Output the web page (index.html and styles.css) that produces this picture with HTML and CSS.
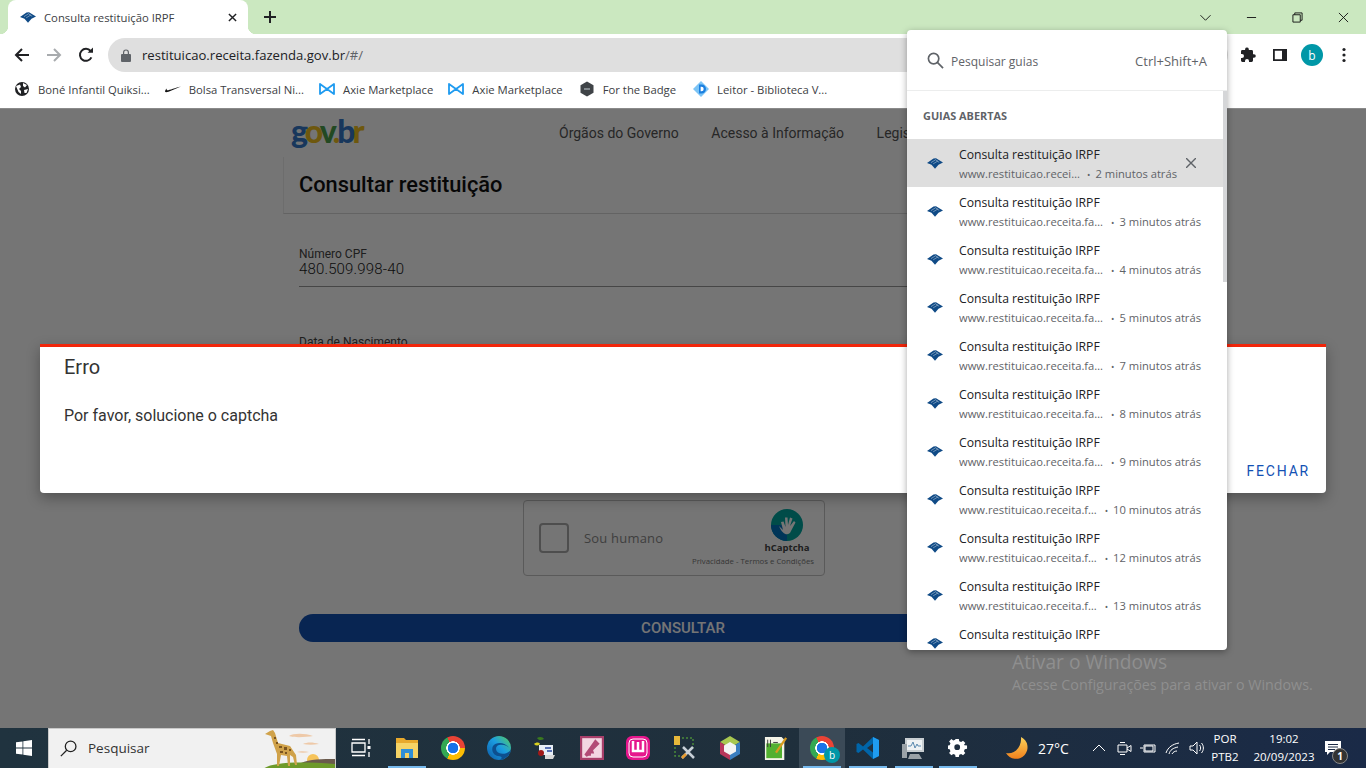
FILE: index.html
```html
<!DOCTYPE html>
<html lang="pt-BR">
<head>
    <meta charset="UTF-8">
    <title>Consulta restituição IRPF</title>
    <link rel="stylesheet" href="styles.css">
</head>
<body>

<svg class="defs" width="0" height="0">
    <symbol id="receita" viewBox="0 0 16 11">
        <path fill="#0f4a86" d="M0 5 6.500 .6 9 .2 16 4.600 11.500 6.800 8 10.800 4.500 6.800z"/>
        <path fill="none" stroke="#fff" stroke-width=".4" d="M4 4.600 8.500 1.800M6.200 5.800 10.800 3M8.400 1.600 12.200 4.400"/>
    </symbol>
    <symbol id="axie" viewBox="0 0 16 14">
        <path fill="none" stroke="#1f9bf0" stroke-width="1.800" stroke-linejoin="round" d="M1 2 8 7 15 2V12L8 7 1 12z"/>
    </symbol>
</svg>

<header class="browser">
    <div class="tabstrip">
        <div class="tab">
            <svg class="fav"><use href="#receita"/></svg>
            <span class="tab-title">Consulta restituição IRPF</span>
            <svg class="tab-close" viewBox="0 0 10 10"><path d="M1 1 9 9M9 1 1 9"/></svg>
        </div>
        <svg class="new-tab" viewBox="0 0 12 12"><path d="M6 0V12M0 6H12"/></svg>
        <div class="win-controls">
            <span class="win-btn"><svg viewBox="0 0 12 12"><path d="M.5 3.500 6 9 11.500 3.500"/></svg></span>
            <span class="win-btn"><svg viewBox="0 0 12 12"><path d="M1 6H11"/></svg></span>
            <span class="win-btn"><svg viewBox="0 0 12 12"><path d="M1 3H9V11H1zM3 3V1H11V9H9"/></svg></span>
            <span class="win-btn"><svg viewBox="0 0 12 12"><path d="M1 1 11 11M11 1 1 11"/></svg></span>
        </div>
    </div>

    <div class="toolbar">
        <svg class="nav-icon" viewBox="0 0 16 16"><path d="M15 8H2M8 2 2 8 8 14"/></svg>
        <svg class="nav-icon off" viewBox="0 0 16 16"><path d="M1 8H14M8 2 14 8 8 14"/></svg>
        <svg class="nav-icon" viewBox="0 0 16 16"><path d="M13.400 10.400A6 6 0 1 1 12.600 4"/><path class="solid" d="M9.600 5.800H15V.6z"/></svg>
        <div class="omnibox">
            <svg class="lock" viewBox="0 0 10 13"><path fill="#5f6368" d="M1 5H2V3.400a3 3 0 0 1 6 0V5H9a1 1 0 0 1 1 1V12a1 1 0 0 1-1 1H1a1 1 0 0 1-1-1V6a1 1 0 0 1 1-1zM3.200 5H6.800V3.400a1.800 1.800 0 0 0-3.600 0z"/></svg>
            <span class="url">restituicao.receita.fazenda.gov.br<span class="url-rest">/#/</span></span>
        </div>
        <div class="toolbar-right">
            <svg class="ext" viewBox="0 0 16 16"><path fill="#202124" d="M14 7.200H13V4.400a1.400 1.400 0 0 0-1.400-1.400H8.800V2a1.900 1.900 0 0 0-3.700 0V3H2.400A1.400 1.400 0 0 0 1 4.400V7H2a2 2 0 0 1 0 4H1v2.600A1.400 1.400 0 0 0 2.400 15H5V14a2 2 0 0 1 4 0v1h2.600a1.400 1.400 0 0 0 1.400-1.400V10.800h1a1.800 1.800 0 0 0 0-3.600z"/></svg>
            <svg class="ext" viewBox="0 0 16 16"><path fill="#202124" fill-rule="evenodd" d="M1 2H15V14H1zM2.800 3.800V12.200H10V3.800z"/></svg>
            <span class="avatar">b</span>
            <svg class="ext" viewBox="0 0 16 16"><circle cx="8" cy="2.500" r="1.600" fill="#202124"/><circle cx="8" cy="8" r="1.600" fill="#202124"/><circle cx="8" cy="13.500" r="1.600" fill="#202124"/></svg>
        </div>
    </div>

    <nav class="bookmarks">
        <a class="bookmark">
            <svg class="bm-icon" viewBox="0 0 16 16"><circle cx="8" cy="8" r="7" fill="#202124"/><path fill="#fff" d="M2 5 6 3.500 7 6 5 8 7 10V13L4.500 11zM9 2 13 4 11 6.500 9 5zM10 9 14 8 12.500 12 10.500 12z"/></svg>
            <span>Boné Infantil Quiksi...</span>
        </a>
        <a class="bookmark">
            <svg class="bm-icon" viewBox="0 0 16 16"><path fill="#111" d="M0 10.500C.5 8.500 1 8 2 7.500 1.500 8.500 1.500 9.300 2.600 9.300 4 9.300 11 6.600 16 5.500L3.500 10.800C1.500 11.500.2 11.500 0 10.500z"/></svg>
            <span>Bolsa Transversal Ni...</span>
        </a>
        <a class="bookmark">
            <svg class="bm-icon"><use href="#axie"/></svg>
            <span>Axie Marketplace</span>
        </a>
        <a class="bookmark">
            <svg class="bm-icon"><use href="#axie"/></svg>
            <span>Axie Marketplace</span>
        </a>
        <a class="bookmark">
            <svg class="bm-icon" viewBox="0 0 16 16"><path fill="#3f4347" d="M8 .5 14.500 4.200V11.800L8 15.500 1.500 11.800V4.200z"/><path stroke="#9aa0a6" stroke-width="1.500" d="M5 8H11"/></svg>
            <span>For the Badge</span>
        </a>
        <a class="bookmark">
            <svg class="bm-icon" viewBox="0 0 16 16"><path fill="#7cc4f5" d="M8 0 16 8 8 16 0 8z"/><path fill="#1a7fe0" d="M6 3.500H8.500a4.500 4.500 0 0 1 0 9H6z"/><path fill="#fff" d="M7.600 5.800H8.500a2.200 2.200 0 0 1 0 4.400H7.600z"/></svg>
            <span>Leitor - Biblioteca V...</span>
        </a>
    </nav>
</header>

<main class="page">
    <div class="site">
        <div class="site-head">
            <span class="logo"><b class="l-blue">g</b><b class="l-yellow">o</b><b class="l-green">v</b><b class="l-yellow">.</b><b class="l-blue">b</b><b class="l-yellow">r</b></span>
            <div class="site-nav">
                <a>Órgãos do Governo</a>
                <a>Acesso à Informação</a>
                <a>Legislação</a>
            </div>
        </div>
        <section class="card">
            <h1 class="card-title">Consultar restituição</h1>
            <form class="form">
                <div class="field">
                    <label>Número CPF</label>
                    <div class="field-value">480.509.998-40</div>
                </div>
                <div class="field field-date">
                    <label>Data de Nascimento</label>
                    <div class="field-value">&nbsp;</div>
                </div>
                <div class="captcha">
                    <span class="captcha-box"></span>
                    <span class="captcha-text">Sou humano</span>
                    <div class="captcha-brand">
                        <svg class="captcha-logo" viewBox="0 0 32 32">
                            <circle cx="16" cy="16" r="16" fill="#00a6a0"/>
                            <path fill="#0074bf" d="M0 16A16 16 0 0 0 16 32V16z"/>
                            <path fill="#fff" d="M8 17 12 21 10 13 12.500 12.500 14.500 18 14 8.500 16.500 8.500 17 16 19 8.500 21.500 9.500 19 17 23 12 24.500 13.500 20 22C18 27 12 27 8 17z"/>
                        </svg>
                        <strong>hCaptcha</strong>
                        <small>Privacidade - Termos e Condições</small>
                    </div>
                </div>
                <button class="submit" type="button">CONSULTAR</button>
            </form>
        </section>
    </div>

    <div class="scrim"></div>

    <div class="dialog">
        <h2>Erro</h2>
        <p>Por favor, solucione o captcha</p>
        <div class="dialog-actions"><a>FECHAR</a></div>
    </div>

    <div class="watermark">
        <div class="wm-title">Ativar o Windows</div>
        <div class="wm-sub">Acesse Configurações para ativar o Windows.</div>
    </div>
</main>

<aside class="tab-search">
    <div class="ts-head">
        <svg class="ts-glass" viewBox="0 0 18 18"><circle cx="7" cy="7" r="5.500"/><path d="M11 11 17 17"/></svg>
        <span class="ts-placeholder">Pesquisar guias</span>
        <span class="ts-shortcut">Ctrl+Shift+A</span>
    </div>
    <div class="ts-body">
        <div class="ts-list">
            <div class="ts-label">GUIAS ABERTAS</div>
            <div class="ts-row current">
                <svg class="fav"><use href="#receita"/></svg>
                <div class="ts-text">
                    <div class="ts-title">Consulta restituição IRPF</div>
                    <div class="ts-sub"><span class="ts-url">www.restituicao.receita.fazenda.gov.br</span><span class="ts-time">2 minutos atrás</span></div>
                </div>
                <svg class="ts-close" viewBox="0 0 10 10"><path d="M0 0 10 10M10 0 0 10"/></svg>
            </div>
            <div class="ts-row">
                <svg class="fav"><use href="#receita"/></svg>
                <div class="ts-text">
                    <div class="ts-title">Consulta restituição IRPF</div>
                    <div class="ts-sub"><span class="ts-url">www.restituicao.receita.fazenda.gov.br</span><span class="ts-time">3 minutos atrás</span></div>
                </div>
            </div>
            <div class="ts-row">
                <svg class="fav"><use href="#receita"/></svg>
                <div class="ts-text">
                    <div class="ts-title">Consulta restituição IRPF</div>
                    <div class="ts-sub"><span class="ts-url">www.restituicao.receita.fazenda.gov.br</span><span class="ts-time">4 minutos atrás</span></div>
                </div>
            </div>
            <div class="ts-row">
                <svg class="fav"><use href="#receita"/></svg>
                <div class="ts-text">
                    <div class="ts-title">Consulta restituição IRPF</div>
                    <div class="ts-sub"><span class="ts-url">www.restituicao.receita.fazenda.gov.br</span><span class="ts-time">5 minutos atrás</span></div>
                </div>
            </div>
            <div class="ts-row">
                <svg class="fav"><use href="#receita"/></svg>
                <div class="ts-text">
                    <div class="ts-title">Consulta restituição IRPF</div>
                    <div class="ts-sub"><span class="ts-url">www.restituicao.receita.fazenda.gov.br</span><span class="ts-time">7 minutos atrás</span></div>
                </div>
            </div>
            <div class="ts-row">
                <svg class="fav"><use href="#receita"/></svg>
                <div class="ts-text">
                    <div class="ts-title">Consulta restituição IRPF</div>
                    <div class="ts-sub"><span class="ts-url">www.restituicao.receita.fazenda.gov.br</span><span class="ts-time">8 minutos atrás</span></div>
                </div>
            </div>
            <div class="ts-row">
                <svg class="fav"><use href="#receita"/></svg>
                <div class="ts-text">
                    <div class="ts-title">Consulta restituição IRPF</div>
                    <div class="ts-sub"><span class="ts-url">www.restituicao.receita.fazenda.gov.br</span><span class="ts-time">9 minutos atrás</span></div>
                </div>
            </div>
            <div class="ts-row">
                <svg class="fav"><use href="#receita"/></svg>
                <div class="ts-text">
                    <div class="ts-title">Consulta restituição IRPF</div>
                    <div class="ts-sub"><span class="ts-url">www.restituicao.receita.fazenda.gov.br</span><span class="ts-time">10 minutos atrás</span></div>
                </div>
            </div>
            <div class="ts-row">
                <svg class="fav"><use href="#receita"/></svg>
                <div class="ts-text">
                    <div class="ts-title">Consulta restituição IRPF</div>
                    <div class="ts-sub"><span class="ts-url">www.restituicao.receita.fazenda.gov.br</span><span class="ts-time">12 minutos atrás</span></div>
                </div>
            </div>
            <div class="ts-row">
                <svg class="fav"><use href="#receita"/></svg>
                <div class="ts-text">
                    <div class="ts-title">Consulta restituição IRPF</div>
                    <div class="ts-sub"><span class="ts-url">www.restituicao.receita.fazenda.gov.br</span><span class="ts-time">13 minutos atrás</span></div>
                </div>
            </div>
            <div class="ts-row">
                <svg class="fav"><use href="#receita"/></svg>
                <div class="ts-text">
                    <div class="ts-title">Consulta restituição IRPF</div>
                    <div class="ts-sub"><span class="ts-url">www.restituicao.receita.fazenda.gov.br</span><span class="ts-time">15 minutos atrás</span></div>
                </div>
            </div>
        </div>
        <div class="ts-scroll"><div class="ts-thumb"></div></div>
    </div>
</aside>

<footer class="taskbar">
    <div class="start">
        <svg viewBox="0 0 16 16"><path fill="#fff" d="M0 2.300 6.500 1.400V7.600H0zM7.300 1.300 16 0V7.600H7.300zM0 8.400H6.500V14.600L0 13.700zM7.300 8.400H16V16L7.300 14.700z"/></svg>
    </div>
    <div class="search">
        <svg class="search-glass" viewBox="0 0 16 16"><circle cx="10" cy="6" r="5"/><path d="M6.300 9.700 .8 15.200"/></svg>
        <span>Pesquisar</span>
        <svg class="search-art" viewBox="0 0 72 40">
            <path fill="#eec9a8" d="M26 7C30 4 42 4 50 7 44 8 32 9 26 7zM40 15C44 13 50 13 56 15 50 16 45 16 40 15zM34 23C37 22 42 22 46 23 42 24 38 24 34 23z"/>
            <circle cx="50" cy="31" r="6" fill="#f6c35a"/>
            <path fill="#6a5a4c" d="M38 34C46 30 60 30 72 30V38H40z"/>
            <path fill="#6d9a2a" d="M0 40C8 34 30 32 72 35V40z"/>
            <path fill="#d0a24a" d="M2 5 7 2 10 1 12 4 15 14 27 17 33 26 34 36 32 36 30 28 27 26V37H25L24 27 18 26 16 37H14L14 25 10 14 8 7z"/>
            <path fill="#7a5420" d="M11 8h2v2h-2zM13 13h2v2h-2zM16 17h3v2h-3zM21 18h3v3h-3zM26 20h2v2h-2zM17 22h3v2h-3zM22 23h2v2h-2z"/>
        </svg>
    </div>
    <div class="task-items">
        <span class="task-item small">
            <svg viewBox="0 0 20 20"><path fill="none" stroke="#fff" stroke-width="1.300" d="M1 5H14V14H1zM1 1.500H14M1 17.500H14M18 1V6M18 14V19"/><rect x="16.500" y="8" width="3" height="3" fill="#fff"/></svg>
        </span>
        <span class="task-item running">
            <svg viewBox="0 0 24 22"><path fill="#e8a92c" d="M1 1H9L11 3H23V6H1z"/><path fill="#f6d365" d="M1 6H23V21H1z"/><path fill="#2f8fd8" d="M6 12H18V21H14V16H10V21H6z"/></svg>
        </span>
        <span class="task-item"><span class="chrome-logo"></span></span>
        <span class="task-item">
            <svg viewBox="0 0 24 24"><defs><linearGradient id="edge" x1="0" y1="1" x2="1" y2="0"><stop offset="0" stop-color="#0c59a4"/><stop offset=".55" stop-color="#1b9de2"/><stop offset="1" stop-color="#5ad05a"/></linearGradient></defs><circle cx="12" cy="12" r="12" fill="url(#edge)"/><path fill="#0d4f8f" d="M24 14C22 10 17 8 12 9 8 10 8 15 12 17 15 18.500 20 18 24 14 23 20 17 24 12 24 17 22 14 20 11 20 6 19 4 14 6 10 9 6 18 5 24 14z"/></svg>
        </span>
        <span class="task-item">
            <svg viewBox="0 0 24 24"><path fill="#3a7a1e" d="M4 2C7 0 10 1 11 3 8 5 5 4 4 2z"/><path fill="#d8d020" d="M1 8C3 6 6 6 7 8 5 10 3 10 1 8z"/><rect x="6" y="9" width="14" height="10" fill="#e8eef6"/><path stroke="#2a4aa0" stroke-width="1.500" d="M12 12H18M14 15H19"/><circle cx="8" cy="17" r="3" fill="#a01818"/><path fill="#d8d8d8" d="M12 19H22L20 23H12z"/></svg>
        </span>
        <span class="task-item">
            <svg viewBox="0 0 22 22"><rect width="22" height="22" fill="#a83f6a"/><rect x="2" y="2" width="18" height="18" fill="#f3d6e2"/><path fill="#b24a76" d="M14 3 18 7 12 13 13 16 10 16 10 18 8 18 6 19 4 17 9 10z"/></svg>
        </span>
        <span class="task-item">
            <svg viewBox="0 0 24 24"><rect width="24" height="24" rx="6" fill="#e6168c"/><rect x="3" y="3" width="18" height="18" rx="4" fill="none" stroke="#fff" stroke-width="1"/><path fill="none" stroke="#fff" stroke-width="2.500" d="M7 5V15H17V5M12 6V14"/></svg>
        </span>
        <span class="task-item">
            <svg viewBox="0 0 24 24"><rect x="2" y="0" width="6" height="9" fill="#e8b83a"/><path fill="none" stroke="#4a8a3a" stroke-width="1.500" stroke-dasharray="2 2" d="M10 2H21V12M3 11V20H12"/><path stroke="#c8d0d8" stroke-width="2.500" d="M10 22 21 11M22 22 11 11"/><path stroke="#e89a30" stroke-width="2.500" d="M10 22 14 18"/></svg>
        </span>
        <span class="task-item">
            <svg viewBox="0 0 24 24"><path fill="#a8c850" d="M12 0 22 6 12 12 2 6z"/><path fill="#b8365a" d="M2 6 12 12V24L2 18z"/><path fill="#3a7ec0" d="M22 6 12 12V24L22 18z"/><path fill="#f4f4f4" d="M12 6 18 9.500V15.500L12 19 6 15.500V9.500z"/></svg>
        </span>
        <span class="task-item">
            <svg viewBox="0 0 24 26"><path fill="#f4f4e8" d="M0 1H18L21 4V26H0z"/><rect x="1.500" y="8" width="17" height="16" fill="#52b030"/><path stroke="#333" d="M3 4V12M6 4V12M9 7H14"/><path stroke="#d89a20" stroke-width="2.500" d="M12 18 23 2"/></svg>
        </span>
        <span class="task-item active running">
            <span class="chrome-logo"></span>
            <span class="task-badge">b</span>
        </span>
        <span class="task-item running">
            <svg viewBox="0 0 24 24"><path fill="#0065a9" d="M17 1 23 4V20L17 23 7 13.500 2.500 17 .5 16V8L2.500 7 7 10.500z"/><path fill="#1f9cf0" d="M17 1 23 4V20L17 23z"/><path fill="#1f3140" d="M17 7.500 11 12 17 16.500z"/></svg>
        </span>
        <span class="task-item running">
            <svg viewBox="0 0 24 24"><path fill="#c8ced2" d="M3 2H22V16H3z"/><path fill="#eef2f4" d="M5 4H20V14H5z"/><path fill="none" stroke="#5a8ab0" d="M6 10H9L11 6 13 12 15 8 16 10H19"/><path fill="#9aa2a8" d="M0 8H5V22H0zM8 18H17L20 23H6z"/></svg>
        </span>
        <span class="task-item running small gear">
            <svg viewBox="0 0 20 20"><path fill="#fff" fill-rule="evenodd" d="M8 0H12L12.500 2.800 14.800 3.800 17.100 2.100 19.900 4.900 18.200 7.200 19.200 7.500 22 8V12L19.200 12.500 18.200 14.800 19.900 17.100 17.100 19.900 14.800 18.200 12.500 19.200 12 22H8L7.500 19.200 5.200 18.200 2.900 19.900.1 17.100 1.800 14.800.8 12.500-2 12V8L.8 7.500 1.800 5.200.1 2.900 2.900.1 5.200 1.800 7.500.8zM10 6.500A3.500 3.500 0 1 0 10 13.500 3.500 3.500 0 1 0 10 6.500z" transform="translate(1 1) scale(.82)"/></svg>
        </span>
    </div>
    <div class="tray">
        <svg class="moon" viewBox="0 0 24 24"><defs><linearGradient id="moon" x1="0" y1="0" x2="0" y2="1"><stop offset="0" stop-color="#fcd35a"/><stop offset="1" stop-color="#f0801c"/></linearGradient></defs><path fill="url(#moon)" d="M16 1A11.500 11.500 0 1 1 1 17C9 19 17 11 16 1z"/></svg>
        <span class="weather">27°C</span>
        <div class="tray-icons">
            <svg viewBox="0 0 16 16"><path d="M2 11 8 5 14 11"/></svg>
            <svg viewBox="0 0 16 16"><path d="M2 5H11V12H2zM11 8 15 5.500V11.500L11 9M4 2.500H9M4 14.500H9"/></svg>
            <svg viewBox="0 0 16 16"><path d="M4 5H15V12H4zM3 8H0M5 6H13V11H5z"/></svg>
            <svg viewBox="0 0 16 16"><path d="M1 13C3 7 8 4 14 3M4 14C5 10 8 8 13 7M7 14C8 12 10 11 12 11"/></svg>
            <svg viewBox="0 0 16 16"><path d="M1 6H4L8 2V14L4 10H1zM10.500 5C12 6.500 12 9.500 10.500 11M12.500 3C15 6 15 10 12.500 13"/></svg>
        </div>
        <div class="lang"><div>POR</div><div>PTB2</div></div>
        <div class="clock"><div>19:02</div><div>20/09/2023</div></div>
        <div class="notif">
            <svg viewBox="0 0 16 15"><path fill="#fff" d="M0 0H16V11H5L2 14V11H0z"/><path stroke="#1b2a45" d="M3 3.500H13M3 6H13M3 8.500H10"/></svg>
            <span class="notif-count">1</span>
        </div>
    </div>
</footer>

</body>
</html>
```

FILE: styles.css
```css
* {
    box-sizing: border-box;
}

body {
    margin: 0;
    width: 1366px;
    height: 768px;
    overflow: hidden;
    display: flex;
    flex-direction: column;
    position: relative;
    font-family: "Open Sans", "Noto Sans", sans-serif;
    font-size: 11.3px;
    color: #202124;
    background: #fff;
}

.defs {
    position: absolute;
}

/* browser frame */
.browser {
    height: 109px;
    flex: none;
    background: #fff;
    border-bottom: 1px solid #8a8a8a;
}

.tabstrip {
    height: 34px;
    background: #cbe8c0;
    display: flex;
    align-items: center;
    padding-left: 8px;
}

.tab {
    width: 240px;
    height: 34px;
    background: #fff;
    border-radius: 8px 8px 0 0;
    display: flex;
    align-items: center;
    padding: 0 11px 0 12px;
    position: relative;
}

.tab::before,
.tab::after {
    content: "";
    position: absolute;
    bottom: 0;
    width: 8px;
    height: 8px;
}

.tab::before {
    left: -8px;
    background: radial-gradient(circle at 0 0, transparent 8px, #fff 8.5px);
}

.tab::after {
    right: -8px;
    background: radial-gradient(circle at 100% 0, transparent 8px, #fff 8.5px);
}

.fav {
    width: 16px;
    height: 11px;
    flex: none;
}

.tab-title {
    margin-left: 8px;
    flex: 1;
    color: #3c4043;
}

.tab-close {
    width: 9px;
    height: 9px;
    fill: none;
    stroke: #202124;
    stroke-width: 1.6;
}

.new-tab {
    width: 12px;
    height: 12px;
    margin-left: 16px;
    fill: none;
    stroke: #202124;
    stroke-width: 2;
}

.win-controls {
    margin-left: auto;
    display: flex;
}

.win-btn {
    width: 46px;
    height: 34px;
    display: flex;
    align-items: center;
    justify-content: center;
}

.win-btn svg {
    width: 11px;
    height: 11px;
    fill: none;
    stroke: #111;
    stroke-width: 1;
}

.toolbar {
    height: 38px;
    display: flex;
    align-items: center;
    padding: 4px 0 0 14px;
    gap: 16px;
}

.nav-icon {
    width: 16px;
    height: 16px;
    fill: none;
    stroke: #202124;
    stroke-width: 2;
}

.nav-icon.off {
    stroke: #a8abae;
}

.nav-icon .solid {
    fill: #202124;
    stroke: none;
}

.omnibox {
    width: 1120px;
    height: 34px;
    margin-left: -2px;
    flex: none;
    background: #dfdfdf;
    border-radius: 17px;
    display: flex;
    align-items: center;
    padding-left: 13px;
    font-size: 13.1px;
}

.lock {
    width: 10px;
    height: 13px;
}

.url {
    margin-left: 11px;
}

.url-rest {
    color: #5f6368;
}

.toolbar-right {
    position: absolute;
    left: 1240px;
    top: 38px;
    height: 34px;
    display: flex;
    align-items: center;
    gap: 16px;
}

.ext {
    width: 16px;
    height: 16px;
}

.avatar {
    width: 22px;
    height: 22px;
    margin: 0 -3px;
    border-radius: 50%;
    background: #0097a7;
    color: #fff;
    display: flex;
    align-items: center;
    justify-content: center;
    font-size: 12px;
}

.bookmarks {
    height: 36px;
    display: flex;
    align-items: center;
    padding: 0 0 2px 14px;
    gap: 15px;
}

.bookmark {
    display: flex;
    align-items: center;
    gap: 8px;
    color: #3c4043;
    white-space: nowrap;
}

.bookmark:nth-child(5) {
    margin-left: 1px;
}

.bookmark:last-child {
    margin-left: 2px;
}

.bm-icon {
    width: 16px;
    height: 16px;
    flex: none;
}

/* page under the modal */
.page {
    flex: 1;
    min-height: 0;
    position: relative;
    overflow: hidden;
    font-family: Roboto, sans-serif;
    background: #fff;
}

.site {
    width: 784px;
    margin-left: 283px;
}

.site-head {
    height: 48px;
    display: flex;
    align-items: center;
    padding-left: 8px;
    white-space: nowrap;
}

.logo {
    font-family: Lato, sans-serif;
    font-size: 32px;
    letter-spacing: -3px;
    width: 72px;
    flex: none;
    margin-top: -6px;
}

.logo b {
    font-weight: 900;
}

.l-blue { color: #3579c9; }
.l-yellow { color: #efbf1f; }
.l-green { color: #4aa04a; }

.site-nav {
    margin-left: 196px;
    display: flex;
    gap: 32.5px;
    font-size: 14px;
    color: #555;
}

.card-title {
    height: 57px;
    margin: 0;
    padding: 0 15px 2px;
    display: flex;
    align-items: center;
    font-size: 21.8px;
    font-weight: 500;
    color: #111;
    border-left: 1px solid #eee;
    border-bottom: 1px solid #d8d8d8;
}

.form {
    padding: 33px 0 0 16px;
}

.field label {
    display: block;
    font-size: 12px;
    line-height: 14px;
    color: #444;
}

.field-value {
    font-size: 15px;
    font-weight: 300;
    letter-spacing: .15px;
    line-height: 16px;
    padding-bottom: 9px;
    border-bottom: 1px solid #999;
    color: #222;
}

.field-date {
    margin-top: 48px;
}

.captcha {
    width: 302px;
    height: 76px;
    margin: 125px 0 0 224px;
    border: 1px solid #c4c4c4;
    border-radius: 4px;
    display: flex;
    align-items: center;
    position: relative;
    padding-left: 15px;
    font-family: "Open Sans", sans-serif;
}

.captcha-box {
    width: 30px;
    height: 30px;
    border: 2px solid #aaa;
    border-radius: 4px;
}

.captcha-text {
    margin-left: 15px;
    font-size: 13px;
    letter-spacing: .2px;
    color: #8a8a8a;
}

.captcha-brand {
    margin-left: auto;
    margin-right: 10px;
    width: 122px;
    display: flex;
    flex-direction: column;
    align-items: center;
    padding-left: 68px;
    white-space: nowrap;
}

.captcha-logo {
    width: 32px;
    height: 32px;
}

.captcha-brand strong {
    font-size: 9.5px;
    line-height: 14px;
    color: #444;
}

.captcha-brand small {
    font-size: 7.8px;
    line-height: 13px;
    color: #777;
    margin-left: -68px;
}

.submit {
    display: block;
    width: 100%;
    height: 28px;
    margin-top: 38px;
    border: none;
    border-radius: 14px;
    background: #1351b4;
    color: #fff;
    font-family: Roboto, sans-serif;
    font-size: 15px;
    font-weight: 500;
    padding: 0;
}

.scrim {
    position: absolute;
    inset: 0;
    background: rgba(0, 0, 0, .54);
}

.dialog {
    position: absolute;
    left: 40px;
    top: 235px;
    width: 1286px;
    height: 149px;
    background: #fff;
    border-top: 3px solid #f0250a;
    border-radius: 0 0 4px 4px;
    box-shadow: 0 5px 14px rgba(0, 0, 0, .3);
    padding: 8px 16px 0 24px;
    color: #333;
    display: flex;
    flex-direction: column;
}

.dialog h2 {
    margin: 0;
    font-size: 20px;
    font-weight: 400;
    line-height: 24px;
}

.dialog p {
    margin: 25px 0 0;
    font-size: 16px;
    line-height: 24px;
}

.dialog-actions {
    margin-top: auto;
    padding-bottom: 14px;
    text-align: right;
    font-size: 14px;
    letter-spacing: 1.8px;
    color: #1351b4;
}

.watermark {
    position: absolute;
    left: 1012px;
    top: 541px;
    color: #8f8f8f;
    font-family: "Open Sans", sans-serif;
    white-space: nowrap;
}

.wm-title {
    font-size: 19.2px;
    line-height: 24px;
}

.wm-sub {
    font-size: 14.3px;
    line-height: 22px;
}

/* tab search popup */
.tab-search {
    position: absolute;
    left: 907px;
    top: 30px;
    width: 320px;
    height: 620px;
    background: #fff;
    border-radius: 4px;
    box-shadow: 0 2px 7px rgba(0, 0, 0, .35);
    display: flex;
    flex-direction: column;
    overflow: hidden;
}

.ts-head {
    height: 61px;
    flex: none;
    display: flex;
    align-items: center;
    padding: 1px 20px 0;
    border-bottom: 1px solid #eceded;
    font-size: 12px;
    color: #5f6368;
}

.ts-glass {
    width: 17px;
    height: 17px;
    fill: none;
    stroke: #5f6368;
    stroke-width: 1.8;
}

.ts-placeholder {
    margin: 2px 0 0 7px;
}

.ts-shortcut {
    margin-left: auto;
    font-size: 13px;
}

.ts-body {
    flex: 1;
    min-height: 0;
    display: flex;
}

.ts-list {
    flex: 1;
    min-width: 0;
    overflow: hidden;
}

.ts-scroll {
    width: 4px;
    flex: none;
}

.ts-thumb {
    height: 191px;
    background: #d5d6d8;
}

.ts-label {
    height: 48px;
    padding: 18px 16px 0;
    font-size: 10.9px;
    font-weight: 700;
    color: #5f6368;
    line-height: 14px;
}

.ts-row {
    height: 48px;
    display: flex;
    align-items: center;
    padding: 0 22px 0 20px;
}

.ts-row.current {
    background: #dedede;
    padding-right: 27px;
}

.ts-text {
    flex: 1;
    min-width: 0;
    align-self: flex-start;
    margin-left: 16px;
    padding-top: 7px;
}

.ts-title {
    font-size: 12.2px;
    line-height: 18px;
    color: #202124;
}

.ts-sub {
    display: flex;
    font-size: 11.2px;
    line-height: 16px;
    margin-top: 2px;
    color: #5f6368;
}

.ts-url {
    flex: 1;
    min-width: 0;
    overflow: hidden;
    white-space: nowrap;
    text-overflow: ellipsis;
}

.ts-time {
    flex: none;
    margin-left: 7px;
}

.ts-time::before {
    content: "•";
    margin-right: 5px;
    font-size: 9px;
}

.ts-close {
    width: 10px;
    height: 10px;
    margin-left: 9px;
    flex: none;
    fill: none;
    stroke: #5f6368;
    stroke-width: 1.4;
}

/* windows taskbar */
.taskbar {
    height: 40px;
    flex: none;
    display: flex;
    background: linear-gradient(90deg, #20333f, #1f2f3c 60%, #1a2a47);
    color: #fff;
}

.start {
    width: 48px;
    display: flex;
    align-items: center;
    justify-content: center;
}

.start svg {
    width: 16px;
    height: 16px;
}

.search {
    width: 288px;
    display: flex;
    align-items: center;
    background: #f1f1f1;
    border: 1px solid #c9c9c9;
    border-bottom: none;
    color: #333;
    font-size: 13.5px;
    padding: 0 0 1px 11px;
    position: relative;
    overflow: hidden;
}

.search-glass {
    width: 17px;
    height: 17px;
    fill: none;
    stroke: #222;
    stroke-width: 1.2;
}

.search span {
    margin-left: 11px;
}

.search-art {
    position: absolute;
    right: 0;
    top: 0;
    width: 72px;
    height: 40px;
}

.task-items {
    display: flex;
    margin-left: 2px;
}

.task-item {
    width: 46.1px;
    height: 40px;
    display: flex;
    align-items: center;
    justify-content: center;
    position: relative;
}

.task-item > svg {
    width: 24px;
    height: 24px;
}

.task-item.small > svg {
    width: 20px;
    height: 20px;
}

.task-item.gear {
    margin-left: -2px;
}

.task-item.running::after {
    content: "";
    position: absolute;
    left: 4px;
    right: 4px;
    bottom: 0;
    height: 2px;
    background: #76b9ed;
}

.task-item.active {
    background: #3b4a57;
}

.chrome-logo {
    width: 24px;
    height: 24px;
    border-radius: 50%;
    background: radial-gradient(circle, #1a73e8 0 5px, #fff 5.5px 6.5px, transparent 7px),
        conic-gradient(from 330deg, #ea4335 0 120deg, #fbbc04 120deg 240deg, #34a853 240deg 360deg);
}

.task-badge {
    position: absolute;
    left: 25px;
    top: 19px;
    width: 16px;
    height: 16px;
    border-radius: 50%;
    background: #0097a7;
    font-size: 10px;
    display: flex;
    align-items: center;
    justify-content: center;
}

.tray {
    margin-left: auto;
    padding-right: 15px;
    display: flex;
    align-items: center;
    font-size: 11.5px;
}

.moon {
    width: 24px;
    height: 24px;
}

.weather {
    margin-left: 9px;
    font-size: 14px;
    width: 47px;
}

.tray-icons {
    display: flex;
    gap: 8.5px;
    margin-left: 6px;
}

.tray-icons svg {
    width: 16px;
    height: 16px;
    fill: none;
    stroke: #fff;
    stroke-width: 1;
}

.lang,
.clock {
    text-align: center;
    line-height: 18px;
}

.lang {
    margin-left: 3px;
    width: 34px;
}

.clock {
    margin-left: 11px;
    width: 62px;
}

.notif {
    width: 36px;
    height: 40px;
    display: flex;
    align-items: center;
    justify-content: center;
    position: relative;
}

.notif svg {
    width: 16px;
    height: 15px;
}

.notif-count {
    position: absolute;
    left: 17px;
    top: 20px;
    width: 16px;
    height: 16px;
    border-radius: 50%;
    background: #333;
    border: 1px solid #888;
    font-size: 10px;
    font-weight: 700;
    display: flex;
    align-items: center;
    justify-content: center;
}
```
